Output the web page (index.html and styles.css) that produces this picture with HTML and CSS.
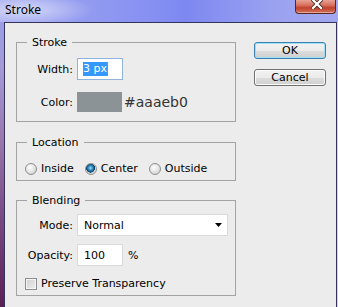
FILE: index.html
```html
<!DOCTYPE html>
<html lang="en">

<head>
  <meta charset="UTF-8">
  <meta name="viewport" content="width=device-width, initial-scale=1.0">
  <title>Stroke</title>
  <link rel="stylesheet" href="styles.css">
</head>

<body>

  <div class="window">
    <div class="window__titlebar">
      <span class="window__title">Stroke</span>
      <button class="window__close" type="button" aria-label="Close">
        <svg width="12" height="10" viewBox="0 0 12 10">
          <path d="M2 1 L10 9 M10 1 L2 9" stroke="#4a2a2a" stroke-width="4" stroke-linecap="square" fill="none" />
          <path d="M2 1 L10 9 M10 1 L2 9" stroke="#ffffff" stroke-width="2.2" stroke-linecap="square" fill="none" />
        </svg>
      </button>
    </div>

    <main class="window__client">
      <form class="groups" action="">

        <fieldset class="group">
          <legend>Stroke</legend>
          <div class="group__body group__body--stroke">
            <label class="field__label">Width:</label>
            <div class="field field--focus"><span class="field__sel">3 px</span><span class="field__caret"></span></div>
            <label class="field__label">Color:</label>
            <div class="color"><span class="color__swatch"></span><span class="color__hex">#aaaeb0</span></div>
          </div>
        </fieldset>

        <fieldset class="group group--location">
          <legend>Location</legend>
          <div class="group__body group__body--location">
            <label class="option"><input type="radio" name="loc"> Inside</label>
            <label class="option"><input type="radio" name="loc" checked> Center</label>
            <label class="option"><input type="radio" name="loc"> Outside</label>
          </div>
        </fieldset>

        <fieldset class="group group--blending">
          <legend>Blending</legend>
          <div class="group__body group__body--blending">
            <label class="field__label">Mode:</label>
            <div class="select">
              <span>Normal</span>
              <svg width="7" height="4" viewBox="0 0 7 4"><path d="M0 0 H7 L3.5 4 Z" fill="#000" /></svg>
            </div>
            <label class="field__label">Opacity:</label>
            <div class="opacity"><div class="field field--small">100</div><span>%</span></div>
            <label class="option option--check"><input type="checkbox"> Preserve Transparency</label>
          </div>
        </fieldset>

      </form>

      <div class="actions">
        <button class="btn btn--default" type="button">OK</button>
        <button class="btn" type="button">Cancel</button>
      </div>
    </main>
  </div>

</body>

</html>
```

FILE: styles.css
```css
:root {
  --clr-face: #ececec;
  --clr-frame: #34345a;
  --clr-etch: #a3a3a3;
  --clr-text: #000;
  --clr-box-border: #d9d9d9;
  --clr-focus: #8fb3dc;
  --clr-select: #3399ff;

  --fnt-main: "DejaVu Sans", Verdana, sans-serif;
  --fnt-title: "Noto Sans", "Open Sans", sans-serif;
}

* {
  box-sizing: border-box;
  margin: 0;
  padding: 0;
}

body {
  width: 338px;
  height: 307px;
  overflow: hidden;
  font-family: var(--fnt-main);
  font-size: 11px;
  color: var(--clr-text);
  background: linear-gradient(to bottom, #969ef0 0, #a49ad6 22%, #9a78ae 45%, #7a4a86 70%, #5a1f52 100%);
}

.window {
  display: flex;
  flex-direction: column;
  height: 100%;
}

.window__titlebar {
  height: 22px;
  display: flex;
  justify-content: space-between;
  align-items: flex-start;
  background:
    radial-gradient(ellipse 70px 16px at 24px 10px, rgba(255, 255, 255, .55), rgba(255, 255, 255, 0)),
    linear-gradient(to right, #a6acf1 0, #939bf0 25%, #8690f2 45%, #7d88f1 55%, #9aa1f0 80%, #a2a8ef 100%);
}

.window__title {
  font-family: var(--fnt-title);
  font-size: 12px;
  line-height: 16px;
  padding: 2px 0 0 5px;
}

.window__close {
  width: 41px;
  height: 14px;
  margin-right: 2px;
  border: 1px solid #5a2624;
  border-top: none;
  border-radius: 0 0 4px 4px;
  background: linear-gradient(to bottom, #e7a393 0, #d7705e 40%, #c2412c 60%, #d2735c 100%);
  box-shadow: inset 0 -1px 0 rgba(255, 255, 255, .4);
  display: flex;
  justify-content: center;
  align-items: flex-start;
}

.window__close svg {
  margin-top: -1px;
  margin-left: 3px;
}

.window__client {
  flex: 1;
  display: flex;
  margin: 0 1px 0 4px;
  padding: 13px 0 0 11px;
  background-color: var(--clr-face);
  border: 1px solid var(--clr-frame);
  border-bottom: none;
  box-shadow: 1px 0 0 #dcc9e6;
}

.groups {
  width: 220px;
  display: flex;
  flex-direction: column;
}

.group {
  border: 1px solid var(--clr-etch);
}

.group--location {
  margin-top: 14px;
}

.group--blending {
  margin-top: 13px;
}

.group legend {
  margin-left: 10px;
  padding: 0 5px;
  line-height: 13px;
}

.group__body--stroke,
.group__body--blending {
  display: grid;
  grid-template-columns: 56px auto;
  column-gap: 4px;
  align-items: center;
  justify-items: start;
}

.group__body--stroke {
  row-gap: 12px;
  padding: 9px 0 9px;
}

.group__body--location {
  display: flex;
  gap: 11px;
  padding: 13px 0 5px 8px;
}

.group__body--blending {
  row-gap: 8px;
  padding: 7px 0 5px;
}

.field__label {
  justify-self: end;
}

.field {
  width: 46px;
  height: 22px;
  padding-left: 5px;
  display: flex;
  align-items: center;
  background-color: #fff;
  border: 1px solid var(--clr-box-border);
}

.field--focus {
  border-color: var(--clr-focus);
}

.field__sel {
  background-color: var(--clr-select);
  color: #fff;
  line-height: 14px;
}

.field__caret {
  width: 1px;
  height: 14px;
  background-color: #e07a00;
}

.color {
  display: flex;
  align-items: center;
  gap: 2px;
}

.color__swatch {
  width: 45px;
  height: 20px;
  background-color: #8b9397;
}

.color__hex {
  font-size: 14px;
  color: #333;
}

.option {
  display: flex;
  align-items: center;
  gap: 4px;
}

.option input {
  appearance: none;
  width: 12px;
  height: 12px;
  border: 1px solid #8e8f8f;
  border-radius: 50%;
  background: radial-gradient(circle at 40% 35%, #fff 0, #e6e6e6 45%, #c9c9c9 100%);
}

.option input:checked {
  background:
    radial-gradient(circle at 45% 40%, #9fe2f7 0, #2b83b8 30%, #0e3b66 55%, rgba(14, 59, 102, 0) 58%),
    radial-gradient(circle at 40% 35%, #fff 0, #e6e6e6 45%, #c9c9c9 100%);
}

.option--check {
  grid-column: 1 / -1;
  margin: 3px 0 0 8px;
}

.option--check input {
  border-radius: 0;
  background-color: #f4f4f4;
  background-image: linear-gradient(135deg, #cfcfcf 0, #eeeeee 100%);
  box-shadow: inset 0 0 0 1px #f4f4f4;
}

.select {
  width: 151px;
  height: 22px;
  padding: 0 5px 0 6px;
  display: flex;
  justify-content: space-between;
  align-items: center;
  background-color: #fff;
  border: 1px solid var(--clr-box-border);
}

.opacity {
  display: flex;
  align-items: center;
  gap: 5px;
}

.field--small {
  padding-left: 6px;
}

.actions {
  margin: 6px 0 0 18px;
  display: flex;
  flex-direction: column;
  gap: 10px;
}

.btn {
  width: 72px;
  height: 17px;
  font-family: var(--fnt-main);
  font-size: 11px;
  line-height: 15px;
  color: var(--clr-text);
  border: 1px solid #707070;
  border-radius: 3px;
  background: linear-gradient(to bottom, #f2f2f2 0, #ebebeb 50%, #dddddd 51%, #cfcfcf 100%);
  box-shadow: inset 0 0 0 1px #fcfcfc;
}

.btn--default {
  border-color: #3c7fb1;
  box-shadow: inset 0 0 0 1px #9ee0f6;
}
```
